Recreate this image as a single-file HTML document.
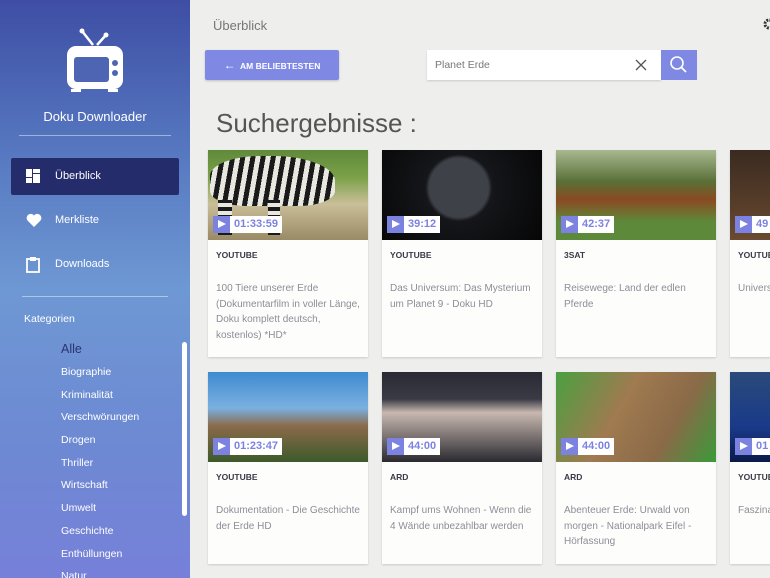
<!DOCTYPE html><html><head><meta charset="utf-8"><style>
*{margin:0;padding:0;box-sizing:border-box}
html,body{width:770px;height:578px;overflow:hidden}
body{background:#eeeeec;font-family:"Liberation Sans",sans-serif;position:relative}
.sb{position:absolute;left:0;top:0;width:190px;height:578px;background:linear-gradient(180deg,#3e4ea4 0%,#5576bf 25%,#6e98d3 50%,#6d8ad3 75%,#7680d8 100%);color:#fff}
.sb .t{position:absolute;left:0;width:190px;text-align:center;top:109px;font-size:13px}
.hr{position:absolute;height:1px;background:rgba(255,255,255,.45)}
.nav{position:absolute;left:11px;width:168px;height:37px;font-size:11px;padding-left:44px;line-height:37px}
.nav.a{background:#252c6b;border-radius:2px}
.ic{position:absolute;left:15px;top:11px}
.cat{position:absolute;left:61px;font-size:10.5px;color:#fff}
.scroll{position:absolute;left:182px;top:342px;width:5px;height:174px;background:#fff;border-radius:3px}
.main{position:absolute;left:190px;top:0;width:580px;height:578px;overflow:hidden}
.card{position:absolute;width:160px;background:#fdfdfb;box-shadow:0 1px 2px rgba(0,0,0,.15);overflow:hidden}
.img{height:90px;position:relative;overflow:hidden}
.bd{position:absolute;left:5px;bottom:7px;height:17px;display:flex;background:#fff}
.bd i{width:17px;height:17px;background:#7c82e0;position:relative}
.bd i:after{content:"";position:absolute;left:5px;top:4px;border-left:8px solid #fff;border-top:4.5px solid transparent;border-bottom:4.5px solid transparent}
.bd b{color:#7c82e0;font-size:11px;padding:0 4px;line-height:17px}
.src{position:absolute;left:8px;top:100px;font-size:8.5px;font-weight:bold;color:#3a3a48}
.ti{position:absolute;left:8px;top:131px;right:6px;font-size:10px;line-height:15.5px;color:#8d8d99}
</style></head><body>
<div class="sb">
<svg style="position:absolute;left:66px;top:28px" width="58" height="70" viewBox="0 0 58 70"><line x1="16" y1="3" x2="27" y2="17" stroke="#fff" stroke-width="2.5"/><line x1="40" y1="7" x2="31" y2="17" stroke="#fff" stroke-width="2.5"/><circle cx="16" cy="3" r="2.5" fill="#fff"/><circle cx="40" cy="7" r="2.5" fill="#fff"/><rect x="1" y="18" width="56" height="43" rx="9" fill="#fff"/><rect x="8" y="29" width="35" height="25" rx="3" fill="#4d65b3"/><circle cx="49" cy="35" r="3" fill="#4d65b3"/><circle cx="49" cy="45" r="3" fill="#4d65b3"/><rect x="5" y="61" width="10" height="3" fill="#fff"/><rect x="42" y="61" width="10" height="3" fill="#fff"/></svg>
<div class="t">Doku Downloader</div>
<div class="hr" style="left:19px;width:152px;top:135px"></div>
<div class="nav a" style="top:158px"><svg class="ic" width="15" height="14"><rect x="0" y="0" width="6" height="8" fill="#fff"/><rect x="7" y="0" width="7" height="4" fill="#fff"/><rect x="7" y="5" width="7" height="9" fill="#fff"/><rect x="0" y="9" width="6" height="5" fill="#fff"/></svg>Überblick</div>
<div class="nav" style="top:202px"><svg class="ic" width="16" height="14" viewBox="0 0 16 14"><path d="M8 14L1.5 7.5A4 4 0 0 1 8 2.5A4 4 0 0 1 14.5 7.5Z" fill="#fff"/></svg>Merkliste</div>
<div class="nav" style="top:246px"><svg class="ic" width="14" height="16" viewBox="0 0 14 16"><rect x="1" y="2" width="12" height="13" fill="none" stroke="#fff" stroke-width="1.8"/><rect x="4" y="0" width="6" height="4" fill="#fff"/></svg>Downloads</div>
<div class="hr" style="left:22px;width:146px;top:296px"></div>
<div style="position:absolute;left:24px;top:313px;font-size:10.5px">Kategorien</div>
<div class="cat" style="top:342px;font-size:12.5px;color:#2c3470">Alle</div>
<div class="cat" style="top:366px">Biographie</div>
<div class="cat" style="top:389px">Kriminalität</div>
<div class="cat" style="top:411px">Verschwörungen</div>
<div class="cat" style="top:434px">Drogen</div>
<div class="cat" style="top:457px">Thriller</div>
<div class="cat" style="top:479px">Wirtschaft</div>
<div class="cat" style="top:502px">Umwelt</div>
<div class="cat" style="top:525px">Geschichte</div>
<div class="cat" style="top:548px">Enthüllungen</div>
<div class="cat" style="top:570px">Natur</div>
<div class="scroll"></div>
</div>
<div class="main">
<div style="position:absolute;left:23px;top:18px;font-size:13px;color:#777">Überblick</div>
<svg style="position:absolute;left:573px;top:18px" width="10" height="12" viewBox="0 0 10 12"><circle cx="6" cy="6" r="4" fill="none" stroke="#333" stroke-width="3" stroke-dasharray="2 1.2"/></svg>
<div style="position:absolute;left:15px;top:50px;width:134px;height:30px;background:#7f89e4;border-radius:2px;color:#fff;font-size:8.5px;font-weight:bold;line-height:30px;text-align:center;box-shadow:0 1px 2px rgba(0,0,0,.2)"><span style="font-size:12px">←</span>&nbsp; AM BELIEBTESTEN</div>
<div style="position:absolute;left:237px;top:50px;width:234px;height:30px;background:#fff;box-shadow:0 1px 2px rgba(0,0,0,.15)"><span style="position:absolute;left:8px;top:9px;font-size:10.5px;color:#777">Planet Erde</span><svg style="position:absolute;right:14px;top:9px" width="12" height="12"><path d="M1 1L11 11M11 1L1 11" stroke="#555" stroke-width="1.3"/></svg></div>
<div style="position:absolute;left:471px;top:50px;width:36px;height:30px;background:#7f89e4"><svg width="36" height="30"><circle cx="16" cy="13" r="6" fill="none" stroke="#fff" stroke-width="1.6"/><line x1="20.5" y1="17.5" x2="25" y2="22" stroke="#fff" stroke-width="1.8"/></svg></div>
<div style="position:absolute;left:26px;top:108px;font-size:26px;color:#555">Suchergebnisse :</div>

<div class="card" style="left:18px;top:150px;height:207px"><div class="img" style="background:linear-gradient(180deg,#5f8a3a 0,#7aa048 30%,#c9bf98 60%,#9a8a66)"><div style="position:absolute;left:2px;top:6px;width:125px;height:50px;border-radius:40% 50% 30% 30%;background:repeating-linear-gradient(100deg,#1a1a1a 0 5px,#e8e8e0 5px 10px)"></div><div style="position:absolute;left:10px;top:50px;width:14px;height:35px;background:repeating-linear-gradient(0deg,#1a1a1a 0 4px,#e8e8e0 4px 8px)"></div><div style="position:absolute;left:60px;top:50px;width:12px;height:35px;background:repeating-linear-gradient(0deg,#1a1a1a 0 4px,#e8e8e0 4px 8px)"></div><div class="bd"><i></i><b>01:33:59</b></div></div><div class="src">YOUTUBE</div><div class="ti">100 Tiere unserer Erde (Dokumentarfilm in voller Länge, Doku komplett deutsch, kostenlos) *HD*</div></div>
<div class="card" style="left:192px;top:150px;height:207px"><div class="img" style="background:radial-gradient(circle at 48% 42%,#3e4248 0 30%,#15161a 34%,#060606 100%)"><div class="bd"><i></i><b>39:12</b></div></div><div class="src">YOUTUBE</div><div class="ti">Das Universum: Das Mysterium um Planet 9 - Doku HD</div></div>
<div class="card" style="left:366px;top:150px;height:207px"><div class="img" style="background:linear-gradient(180deg,#a8b890 0,#5a7038 35%,#8a4a22 55%,#5d8a3a 80%)"><div class="bd"><i></i><b>42:37</b></div></div><div class="src">3SAT</div><div class="ti">Reisewege: Land der edlen Pferde</div></div>
<div class="card" style="left:540px;top:150px;height:207px"><div class="img" style="background:linear-gradient(180deg,#3a2a20,#6a4a30)"><div class="bd"><i></i><b>49</b></div></div><div class="src">YOUTUBE</div><div class="ti">Univers neun</div></div>

<div class="card" style="left:18px;top:372px;height:192px"><div class="img" style="background:linear-gradient(180deg,#3f8ad0 0,#7ab0e0 40%,#8a6a4a 60%,#3d5a2a 100%)"><div class="bd"><i></i><b>01:23:47</b></div></div><div class="src">YOUTUBE</div><div class="ti">Dokumentation - Die Geschichte der Erde HD</div></div>
<div class="card" style="left:192px;top:372px;height:192px"><div class="img" style="background:linear-gradient(180deg,#2a2a35,#3a3a45 30%,#c8b8b0 45%,#2a2a30 100%)"><div class="bd"><i></i><b>44:00</b></div></div><div class="src">ARD</div><div class="ti">Kampf ums Wohnen - Wenn die 4 Wände unbezahlbar werden</div></div>
<div class="card" style="left:366px;top:372px;height:192px"><div class="img" style="background:linear-gradient(120deg,#4aa040,#a07a50 40%,#8a6a48 70%,#3a9a3a)"><div class="bd"><i></i><b>44:00</b></div></div><div class="src">ARD</div><div class="ti">Abenteuer Erde: Urwald von morgen - Nationalpark Eifel - Hörfassung</div></div>
<div class="card" style="left:540px;top:372px;height:192px"><div class="img" style="background:linear-gradient(180deg,#2a4a7a,#1a3a8a 60%,#0a1a4a)"><div class="bd"><i></i><b>01</b></div></div><div class="src">YOUTUBE</div><div class="ti">Faszina oben (D</div></div>
</div>
</body></html>
